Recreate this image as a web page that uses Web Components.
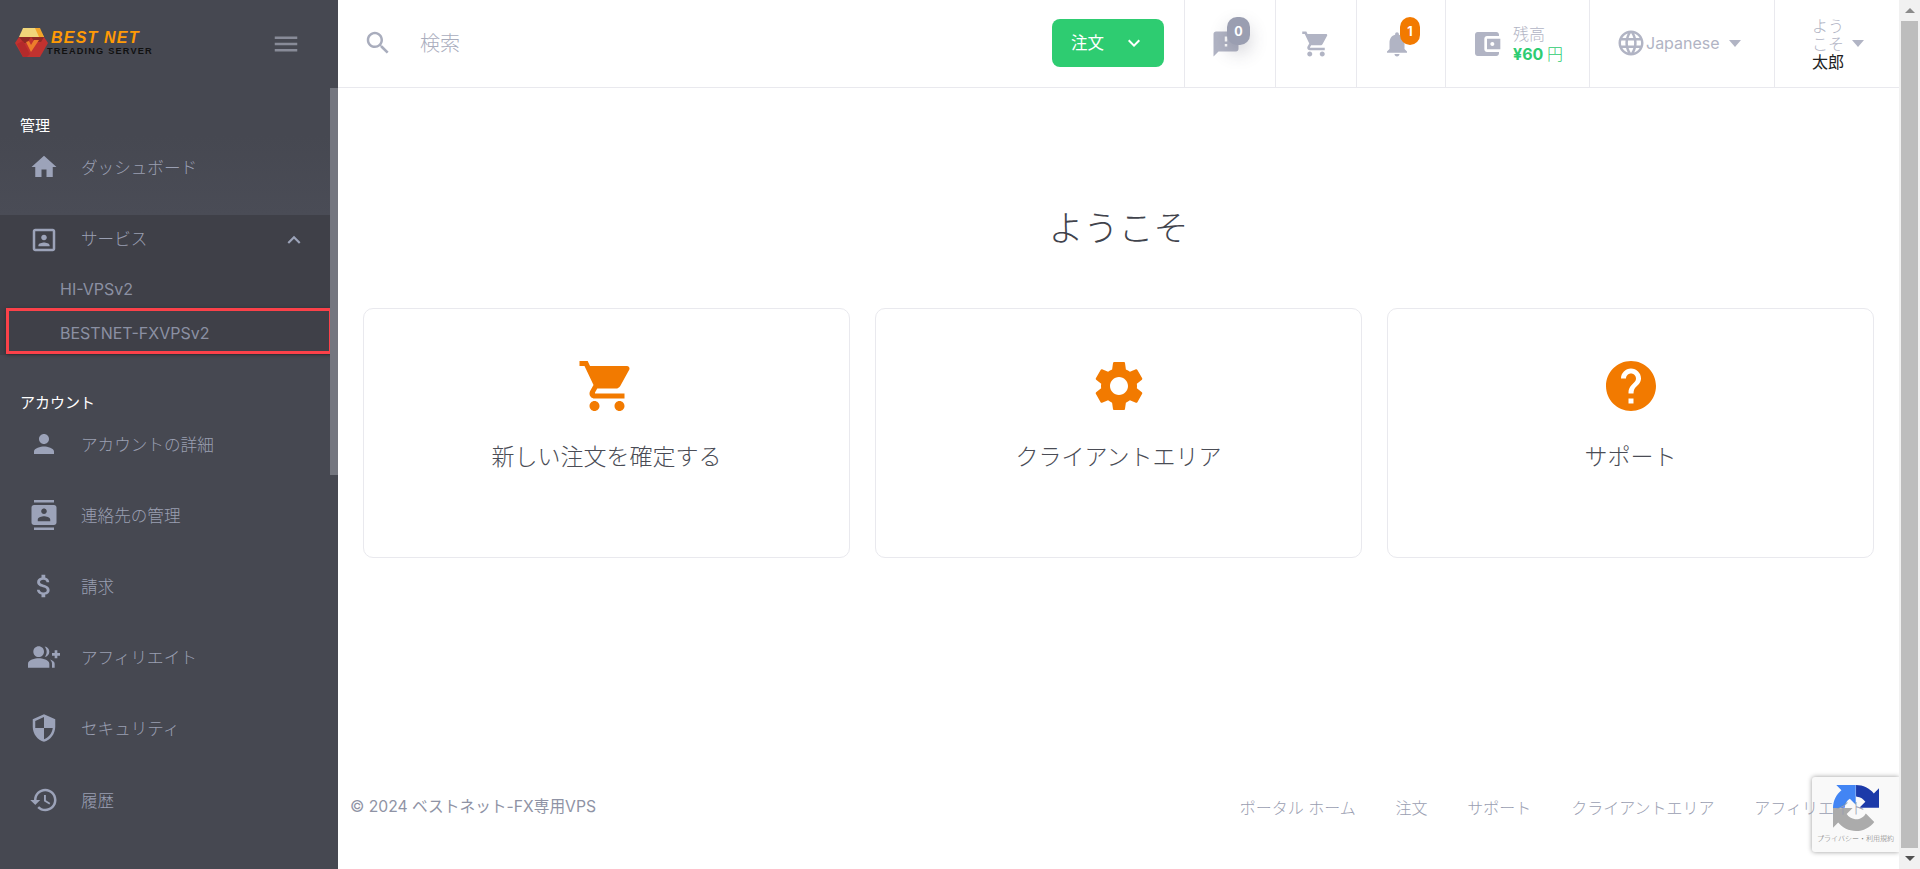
<!DOCTYPE html>
<html lang="ja">
<head>
<meta charset="utf-8">
<title>BEST NET</title>
<style>
html,body{margin:0;padding:0;height:100%;overflow:hidden;background:#fff}
body{font-family:Inter,"Noto Sans CJK JP",sans-serif}
</style>
</head>
<body>
<app-shell>
  <side-bar slot="side">
    <nav-heading>管理</nav-heading>
    <nav-item icon="home" hover>ダッシュボード</nav-item>
    <nav-group>
      <nav-item icon="portrait" slot="head" compact chevron>サービス</nav-item>
      <nav-sub>HI-VPSv2</nav-sub>
      <nav-sub marked>BESTNET-FXVPSv2</nav-sub>
    </nav-group>
    <nav-heading second>アカウント</nav-heading>
    <nav-item icon="person">アカウントの詳細</nav-item>
    <nav-item icon="contacts">連絡先の管理</nav-item>
    <nav-item icon="money">請求</nav-item>
    <nav-item icon="groupadd">アフィリエイト</nav-item>
    <nav-item icon="security">セキュリティ</nav-item>
    <nav-item icon="history">履歴</nav-item>
  </side-bar>
  <top-bar slot="top"></top-bar>
  <welcome-page slot="content"></welcome-page>
  <site-footer slot="footer"></site-footer>
  <page-scrollbar slot="scroll"></page-scrollbar>
  <captcha-badge slot="overlay"></captcha-badge>
</app-shell>
<script>
const P={
home:'M10 20v-6h4v6h5v-8h3L12 3 2 12h3v8z',
portrait:'M19 3H5c-1.1 0-2 .9-2 2v14c0 1.1.9 2 2 2h14c1.1 0 2-.9 2-2V5c0-1.1-.9-2-2-2zm0 16H5V5h14v14zM12 12.25c1.24 0 2.25-1.01 2.25-2.25S13.24 7.75 12 7.75 9.75 8.76 9.75 10s1.01 2.25 2.25 2.25zm4.5 4c0-1.5-3-2.25-4.5-2.25s-4.5.75-4.5 2.25V17h9v-.75z',
person:'M12 12c2.21 0 4-1.79 4-4s-1.79-4-4-4-4 1.79-4 4 1.79 4 4 4zm0 2c-2.67 0-8 1.34-8 4v2h16v-2c0-2.66-5.33-4-8-4z',
contacts:'M20 0H4v2h16V0zM4 24h16v-2H4v2zM20 4H4c-1.1 0-2 .9-2 2v12c0 1.1.9 2 2 2h16c1.1 0 2-.9 2-2V6c0-1.1-.9-2-2-2zm-8 2.75c1.24 0 2.25 1.01 2.25 2.25s-1.01 2.25-2.25 2.25S9.75 10.24 9.75 9 10.76 6.75 12 6.75zM17 17H7v-1.5c0-1.67 3.33-2.5 5-2.5s5 .83 5 2.5V17z',
money:'M11.8 10.9c-2.27-.59-3-1.2-3-2.15 0-1.09 1.01-1.85 2.7-1.85 1.78 0 2.44.85 2.5 2.1h2.21c-.07-1.72-1.12-3.3-3.21-3.81V3h-3v2.16c-1.94.42-3.5 1.68-3.5 3.61 0 2.31 1.91 3.46 4.7 4.13 2.5.6 3 1.48 3 2.41 0 .69-.49 1.79-2.7 1.79-2.06 0-2.87-.92-2.98-2.1h-2.2c.12 2.19 1.76 3.42 3.68 3.83V21h3v-2.15c1.95-.37 3.5-1.5 3.5-3.55 0-2.84-2.43-3.81-4.7-4.4z',
groupadd:'M22 9V7h-2v2h-2v2h2v2h2v-2h2V9h-2zM8 12c2.21 0 4-1.79 4-4s-1.79-4-4-4-4 1.79-4 4 1.79 4 4 4zM8 13c-2.67 0-8 1.34-8 4v3h16v-3c0-2.66-5.33-4-8-4zM12.51 4.05C13.43 5.11 14 6.49 14 8s-.57 2.89-1.49 3.95C14.47 11.7 16 10.04 16 8s-1.53-3.7-3.49-3.95zM16.53 13.83C17.42 14.66 18 15.7 18 17v3h2v-3c0-1.45-1.59-2.51-3.47-3.17z',
security:'M12 1L3 5v6c0 5.55 3.84 10.74 9 12 5.16-1.26 9-6.45 9-12V5l-9-4zm0 10.99h7c-.53 4.12-3.28 7.79-7 8.94V12H5V6.3l7-3.11v8.8z',
history:'M13 3c-4.97 0-9 4.03-9 9H1l3.89 3.89.07.14L9 12H6c0-3.87 3.13-7 7-7s7 3.13 7 7-3.13 7-7 7c-1.93 0-3.68-.79-4.94-2.06l-1.42 1.42C8.27 19.99 10.51 21 13 21c4.97 0 9-4.03 9-9s-4.03-9-9-9zm-1 5v5l4.28 2.54.72-1.21-3.5-2.08V8H12z',
less:'M12 8l-6 6 1.41 1.41L12 10.83l4.59 4.58L18 14z',
more:'M16.59 8.59L12 13.17 7.41 8.59 6 10l6 6 6-6z',
menu:'M3 18h18v-2H3v2zm0-5h18v-2H3v2zm0-7v2h18V6H3z',
search:'M15.5 14h-.79l-.28-.27C15.41 12.59 16 11.11 16 9.5 16 5.91 13.09 3 9.5 3S3 5.91 3 9.5 5.91 16 9.5 16c1.61 0 3.09-.59 4.23-1.57l.27.28v.79l5 4.99L20.49 19l-4.99-5zm-6 0C7.01 14 5 11.99 5 9.5S7.01 5 9.5 5 14 7.01 14 9.5 11.99 14 9.5 14z',
feedback:'M20 2H4c-1.1 0-1.99.9-1.99 2L2 22l4-4h14c1.1 0 2-.9 2-2V4c0-1.1-.9-2-2-2zm-7 12h-2v-2h2v2zm0-4h-2V6h2v4z',
cart:'M7 18c-1.1 0-1.99.9-1.99 2S5.9 22 7 22s2-.9 2-2-.9-2-2-2zM1 2v2h2l3.6 7.59-1.35 2.45c-.16.28-.25.61-.25.96 0 1.1.9 2 2 2h12v-2H7.42c-.14 0-.25-.11-.25-.25l.03-.12.9-1.63h7.45c.75 0 1.41-.41 1.75-1.03l3.58-6.49c.08-.14.12-.31.12-.48 0-.55-.45-1-1-1H5.21l-.94-2H1zm16 16c-1.1 0-1.99.9-1.99 2s.89 2 1.99 2 2-.9 2-2-.9-2-2-2z',
bell:'M12 22c1.1 0 2-.9 2-2h-4c0 1.1.89 2 2 2zm6-6v-5c0-3.07-1.64-5.64-4.5-6.32V4c0-.83-.67-1.5-1.5-1.5s-1.5.67-1.5 1.5v.68C7.63 5.36 6 7.92 6 11v5l-2 2v1h16v-1l-2-2z',
wallet:'M21 18v1c0 1.1-.9 2-2 2H5c-1.11 0-2-.9-2-2V5c0-1.1.89-2 2-2h14c1.1 0 2 .9 2 2v1h-9c-1.11 0-2 .9-2 2v8c0 1.1.89 2 2 2h9zm-9-2h10V8H12v8zm4-2.5c-.83 0-1.5-.67-1.5-1.5s.67-1.5 1.5-1.5 1.5.67 1.5 1.5-.67 1.5-1.5 1.5z',
globe:'M11.99 2C6.47 2 2 6.48 2 12s4.47 10 9.99 10C17.52 22 22 17.52 22 12S17.52 2 11.99 2zm6.93 6h-2.95c-.32-1.25-.78-2.45-1.38-3.56 1.84.63 3.37 1.91 4.33 3.56zM12 4.04c.83 1.2 1.48 2.53 1.91 3.96h-3.82c.43-1.43 1.08-2.76 1.91-3.96zM4.26 14C4.1 13.36 4 12.69 4 12s.1-1.36.26-2h3.38c-.08.66-.14 1.32-.14 2 0 .68.06 1.34.14 2H4.26zm.82 2h2.95c.32 1.25.78 2.45 1.38 3.56-1.84-.63-3.37-1.9-4.33-3.56zm2.95-8H5.08c.96-1.66 2.49-2.93 4.33-3.56C8.81 5.55 8.35 6.75 8.03 8zM12 19.96c-.83-1.2-1.48-2.53-1.91-3.96h3.82c-.43 1.43-1.08 2.76-1.91 3.96zM14.34 14H9.66c-.09-.66-.16-1.32-.16-2 0-.68.07-1.35.16-2h4.68c.09.65.16 1.32.16 2 0 .68-.07 1.34-.16 2zm.25 5.56c.6-1.11 1.06-2.31 1.38-3.56h2.95c-.96 1.65-2.49 2.93-4.33 3.56zM16.36 14c.08-.66.14-1.32.14-2 0-.68-.06-1.34-.14-2h3.38c.16.64.26 1.31.26 2s-.1 1.36-.26 2h-3.38z',
gear:'M19.14 12.94c.04-.3.06-.61.06-.94 0-.32-.02-.64-.07-.94l2.03-1.58c.18-.14.23-.41.12-.61l-1.92-3.32c-.12-.22-.37-.29-.59-.22l-2.39.96c-.5-.38-1.03-.7-1.62-.94l-.36-2.54c-.04-.24-.24-.41-.48-.41h-3.84c-.24 0-.43.17-.47.41l-.36 2.54c-.59.24-1.13.57-1.62.94l-2.39-.96c-.22-.08-.47 0-.59.22L2.74 8.87c-.12.21-.08.47.12.61l2.03 1.58c-.05.3-.09.63-.09.94s.02.64.07.94l-2.03 1.58c-.18.14-.23.41-.12.61l1.92 3.32c.12.22.37.29.59.22l2.39-.96c.5.38 1.03.7 1.62.94l.36 2.54c.05.24.24.41.48.41h3.84c.24 0 .44-.17.47-.41l.36-2.54c.59-.24 1.13-.56 1.62-.94l2.39.96c.22.08.47 0 .59-.22l1.92-3.32c.12-.22.07-.47-.12-.61l-2.01-1.58zM12 15.6c-1.98 0-3.6-1.62-3.6-3.6s1.62-3.6 3.6-3.6 3.6 1.62 3.6 3.6-1.62 3.6-3.6 3.6z',
help:'M12 2C6.48 2 2 6.48 2 12s4.48 10 10 10 10-4.48 10-10S17.52 2 12 2zm1 17h-2v-2h2v2zm2.07-7.75l-.9.92C13.45 12.9 13 13.5 13 15h-2v-.5c0-1.1.45-2.1 1.17-2.83l1.24-1.26c.37-.36.59-.86.59-1.41 0-1.1-.9-2-2-2s-2 .9-2 2H8c0-2.21 1.79-4 4-4s4 1.79 4 4c0 .88-.36 1.68-.93 2.25z'
};
const svg=(n,s,c)=>`<svg width="${s}" height="${s}" viewBox="0 0 24 24" fill="${c||'currentColor'}" style="display:block;flex:none"><path d="${P[n]}"/></svg>`;
const def=(name,html)=>customElements.define(name,class extends HTMLElement{
  constructor(){super();this.attachShadow({mode:'open'});}
  connectedCallback(){this.shadowRoot.innerHTML=typeof html==='function'?html(this):html;}
});

def('app-shell',`<style>
:host{display:flex;width:1920px;height:869px;overflow:hidden;position:relative}
.main{flex:1;min-width:0;display:flex;flex-direction:column}
.content{flex:1;min-height:0}
</style>
<slot name="side"></slot>
<div class="main">
  <slot name="top"></slot>
  <div class="content"><slot name="content"></slot></div>
  <slot name="footer"></slot>
</div>
<slot name="scroll"></slot>
<slot name="overlay"></slot>`);

def('side-bar',()=>`<style>
:host{display:block;width:338px;flex:none;height:869px;background:#464851;position:relative;overflow:hidden;color:#8b90a3}
.head{height:88px;display:flex;align-items:center;justify-content:space-between;padding:0 37px 0 15px;box-sizing:border-box}
.logo{display:flex;align-items:center;margin-top:-2px}
.words{display:flex;flex-direction:column;margin-left:0}
.b{font:italic 700 16px/16px "Liberation Sans",sans-serif;letter-spacing:1.2px;color:#ff9a05;padding-left:3px}
.t{font:700 9.2px/10px "Liberation Sans",sans-serif;letter-spacing:1.18px;color:#111;margin-top:0;margin-left:-1px;white-space:nowrap}
.menu{color:#888b98}
.bar{position:absolute;left:330px;top:88px;width:8px;height:387px;background:#74767f}
</style>
<div class="head">
 <div class="logo">
  <svg width="33" height="30" viewBox="0 0 33 30">
   <polygon points="8,0 24,0 29,9 4,9" fill="#f0d67a"/>
   <polygon points="20,0 25,0 29,9 24,9" fill="#f2a52a"/>
   <polygon points="4,9 29,9 33,15 25,29 8,29 0,15" fill="#c1322f"/>
   <polygon points="4,9 16,9 12,15 9,15" fill="#8f2a25"/>
   <polygon points="16,9 29,9 26,14 20,14" fill="#8f2a25"/>
   <polygon points="11,14 16,24 24,12 19,12 16,17 14,13" fill="#ec7d2b"/>
   <polygon points="8,13 15,26 12,29 8,29 2,16" fill="#b42a2b"/>
  </svg>
  <div class="words"><div class="b">BEST NET</div><div class="t">TREADING SERVER</div></div>
 </div>
 <div class="menu">${svg('menu',30)}</div>
</div>
<slot></slot>
<div class="bar"></div>`);

def('nav-heading',h=>`<style>
:host{display:block;padding:${h.hasAttribute('second')?'38px':'28px'} 0 0 20px;${h.hasAttribute('second')?'margin-bottom:-5px;':''}font-size:15px;line-height:20px;color:#fff;font-weight:400;position:relative}
</style><slot></slot>`);

def('nav-item',h=>`<style>
:host{display:flex;align-items:center;height:${h.hasAttribute('compact')?'50px':h.hasAttribute('hover')?'79px':'71.2px'};width:330px;box-sizing:border-box;padding-left:30px;font-size:16.6px;font-weight:300;color:#9a9fb2;
${h.hasAttribute('hover')?'padding-bottom:17px;background:linear-gradient(#464851,#4a4c56);':''}}
.i{width:27px;display:flex;justify-content:center;color:#9ca3b9}
.t{margin-left:24px;flex:1;${h.hasAttribute('compact')?'margin-top:-4px':''}}
.c{margin-right:23px;color:#9ca3b9}
</style><div class="i">${svg(h.getAttribute('icon'),h.getAttribute('icon')==='groupadd'?32:30)}</div><div class="t"><slot></slot></div>${h.hasAttribute('chevron')?`<div class="c">${svg('less',26)}</div>`:''}`);

def('nav-group',`<style>
:host{display:block;width:330px;background:#3f4048;padding-bottom:2px}
</style><slot name="head"></slot><slot></slot>`);

def('nav-sub',h=>`<style>
:host{display:flex;align-items:center;height:44px;box-sizing:border-box;padding:3px 0 0 60px;font-size:16px;color:#8b90a3;position:relative;font-weight:400}
.mark{position:absolute;left:6px;top:-1px;width:326px;height:46px;box-sizing:border-box;border:3.5px solid #fb4149;box-shadow:0 1px 4px rgba(0,0,0,.35)}
</style><slot></slot>${h.hasAttribute('marked')?'<div class="mark"></div>':''}`);

def('top-bar',`<style>
:host{display:flex;align-items:stretch;height:88px;box-sizing:border-box;border-bottom:1px solid #e9e9ee;color:#b1b4c4}
.search{flex:1;display:flex;align-items:center;padding:0 0 2px 25px;font-size:20px;font-weight:300;color:#a9adbd}
.search span{margin-left:27px}
.order{display:flex;align-items:center;justify-content:center;width:112px;height:48px;border-radius:8px;background:#2ecc71;color:#fff;font-size:16.5px;margin:19px 20px 0 0;gap:18px;padding-left:1px;box-sizing:border-box}
.order span{margin-top:-2px}
.cell{border-left:1px solid #e9e9ee;box-sizing:border-box;display:flex;align-items:center;position:relative;flex:none}
.badge{position:absolute;top:17px;height:28px;border-radius:10px;width:23px;display:flex;align-items:center;justify-content:center;font-size:12.5px;font-weight:700;color:#fff;box-sizing:border-box}
.g{background:#9a9eb1;box-shadow:0 8px 18px rgba(60,60,80,.22)}
.o{background:#f27a00}
.bal{margin-left:10px;font-size:16px;line-height:20px;font-weight:300}
.bal b{color:#2ecc71;font-weight:700;display:block}
.bal b i{font-style:normal;font-weight:300}
.caret{width:0;height:0;border:6.5px solid transparent;border-top:7px solid #b1b4c4;border-bottom:0;flex:none}
.hi{width:36px;font-size:16px;line-height:18px;font-weight:300;margin-left:37px;text-align:left}
.hi b{display:block;color:#222;font-weight:400;line-height:18px;font-size:16px}
</style>
<div class="search">${svg('search',30)}<span>検索</span></div>
<div class="order"><span>注文</span>${svg('more',24)}</div>
<div class="cell" style="width:91px"><div style="margin-left:26px;margin-top:1px">${svg('feedback',30)}</div><div class="badge g" style="left:42px">0</div></div>
<div class="cell" style="width:81px"><div style="margin-left:25px;margin-top:1px">${svg('cart',30)}</div></div>
<div class="cell" style="width:89px"><div style="margin-left:25px;margin-top:1px">${svg('bell',30)}</div><div class="badge o" style="left:43px;width:20px">1</div></div>
<div class="cell" style="width:144px"><div style="margin-left:25px">${svg('wallet',32)}</div><div class="bal">残高<b>¥60 <i>円</i></b></div></div>
<div class="cell" style="width:185px;padding-bottom:1px"><div style="margin-left:26px">${svg('globe',30)}</div><span style="font-size:16px;margin-left:0">Japanese</span><div class="caret" style="margin-left:9px"></div></div>
<div class="cell" style="width:125px"><div class="hi">ようこそ<b>太郎</b></div><div class="caret" style="margin:-1px 0 0 4px"></div></div>`);

def('welcome-page',`<style>
:host{display:block;padding:0 25px}
h1{margin:0;padding-top:113px;font-size:35px;line-height:54px;font-weight:300;color:#41434c;text-align:center;height:54px}
.cards{display:grid;grid-template-columns:repeat(3,1fr);gap:25px;margin-top:53px}
</style>
<h1>ようこそ</h1>
<div class="cards">
<link-card icon="cart">新しい注文を確定する</link-card>
<link-card icon="gear">クライアントエリア</link-card>
<link-card icon="help">サポート</link-card>
</div>`);

def('link-card',h=>`<style>
:host{display:flex;flex-direction:column;align-items:center;height:250px;box-sizing:border-box;border:1px solid #e9e9ee;border-radius:10px;padding-top:47px;font-size:23px;font-weight:300;color:#4a4c55;line-height:34px}
.t{margin-top:24px}
</style>${svg(h.getAttribute('icon'),60,'#f27a00')}<div class="t"><slot></slot></div>`);

def('site-footer',`<style>
:host{display:flex;justify-content:space-between;align-items:center;height:64px;padding:0 33px 0 12px;margin-bottom:30px;font-size:16px;color:#9a9eb1;font-weight:300;white-space:nowrap;box-sizing:border-box;position:relative;z-index:2}
.c{font-weight:400;color:#8f93a5;margin-top:-4px;font-size:15.7px}
.l{display:flex;gap:39.8px}
</style>
<div class="c">© 2024 ベストネット-FX専用VPS</div>
<div class="l"><span>ポータル ホーム</span><span>注文</span><span>サポート</span><span>クライアントエリア</span><span>アフィリエイト</span></div>`);

def('page-scrollbar',`<style>
:host{display:flex;flex-direction:column;align-items:center;width:21px;flex:none;height:869px;background:#f1f1f1;position:relative;z-index:3}
.up,.dn{height:21px;display:flex;align-items:center;justify-content:center;flex:none}
.th{flex:1;width:17px;background:#bdbdbd}
.up i,.dn i{width:0;height:0;border:5px solid transparent}
.up i{border-bottom:5px solid #8a8a8a;border-top:0}
.dn i{border-top:5px solid #505050;border-bottom:0}
</style>
<div class="up"><i></i></div><div class="th"></div><div class="dn"><i></i></div>`);

def('captcha-badge',`<style>
:host{position:absolute;left:1812px;top:777px;width:87px;height:75px;background:#f9f9f9;border-radius:3px 0 0 3px;box-shadow:0 0 5px rgba(0,0,0,.4);display:block;overflow:hidden;z-index:1}
svg{position:absolute;left:21px;top:8px}
.t{position:absolute;left:0;right:0;top:55px;text-align:center;font-size:7px;line-height:12px;color:#777;font-family:"Noto Sans CJK JP",sans-serif;white-space:nowrap;font-weight:300}
</style>
<svg width="46" height="46" viewBox="0 0 64 64">
 <path d="M.001 32.045l.033 1.37V59.4l7.16-7.16c5.858 7.172 14.774 11.753 24.76 11.753 10.4 0 19.622-4.96 25.458-12.64L45.676 39.492a15.55 15.55 0 0 1-4.754 5.334c-2.05 1.6-4.952 2.906-8.968 2.906-.485 0-.86-.057-1.135-.163-4.976-.393-9.288-3.14-11.828-7.124l8.307-8.307C16.776 32.18 4.9 32.205.001 32.133z" fill="#ababab"/>
 <path d="M31.862.094l-1.37.033H4.594l7.16 7.16C4.58 13.147 0 22.06 0 32.046h16.1c0-.485.057-.86.163-1.135.393-4.976 3.14-9.288 7.124-11.828l8.307 8.307c-.04-10.522-.066-22.4.006-27.295z" fill="#4285f4"/>
 <path d="M64 31.955l-.033-1.37V4.687l-7.16 7.16C50.948 4.674 42.033.093 32.05.093v16.07c.485 0 .86.057 1.135.163 4.976.393 9.288 3.14 11.828 7.124l-8.307 8.307c10.522-.04 22.4-.066 27.295.006z" fill="#1c3aa9"/>
</svg>
<div class="t">プライバシー・利用規約</div>`);
</script>
</body>
</html>
